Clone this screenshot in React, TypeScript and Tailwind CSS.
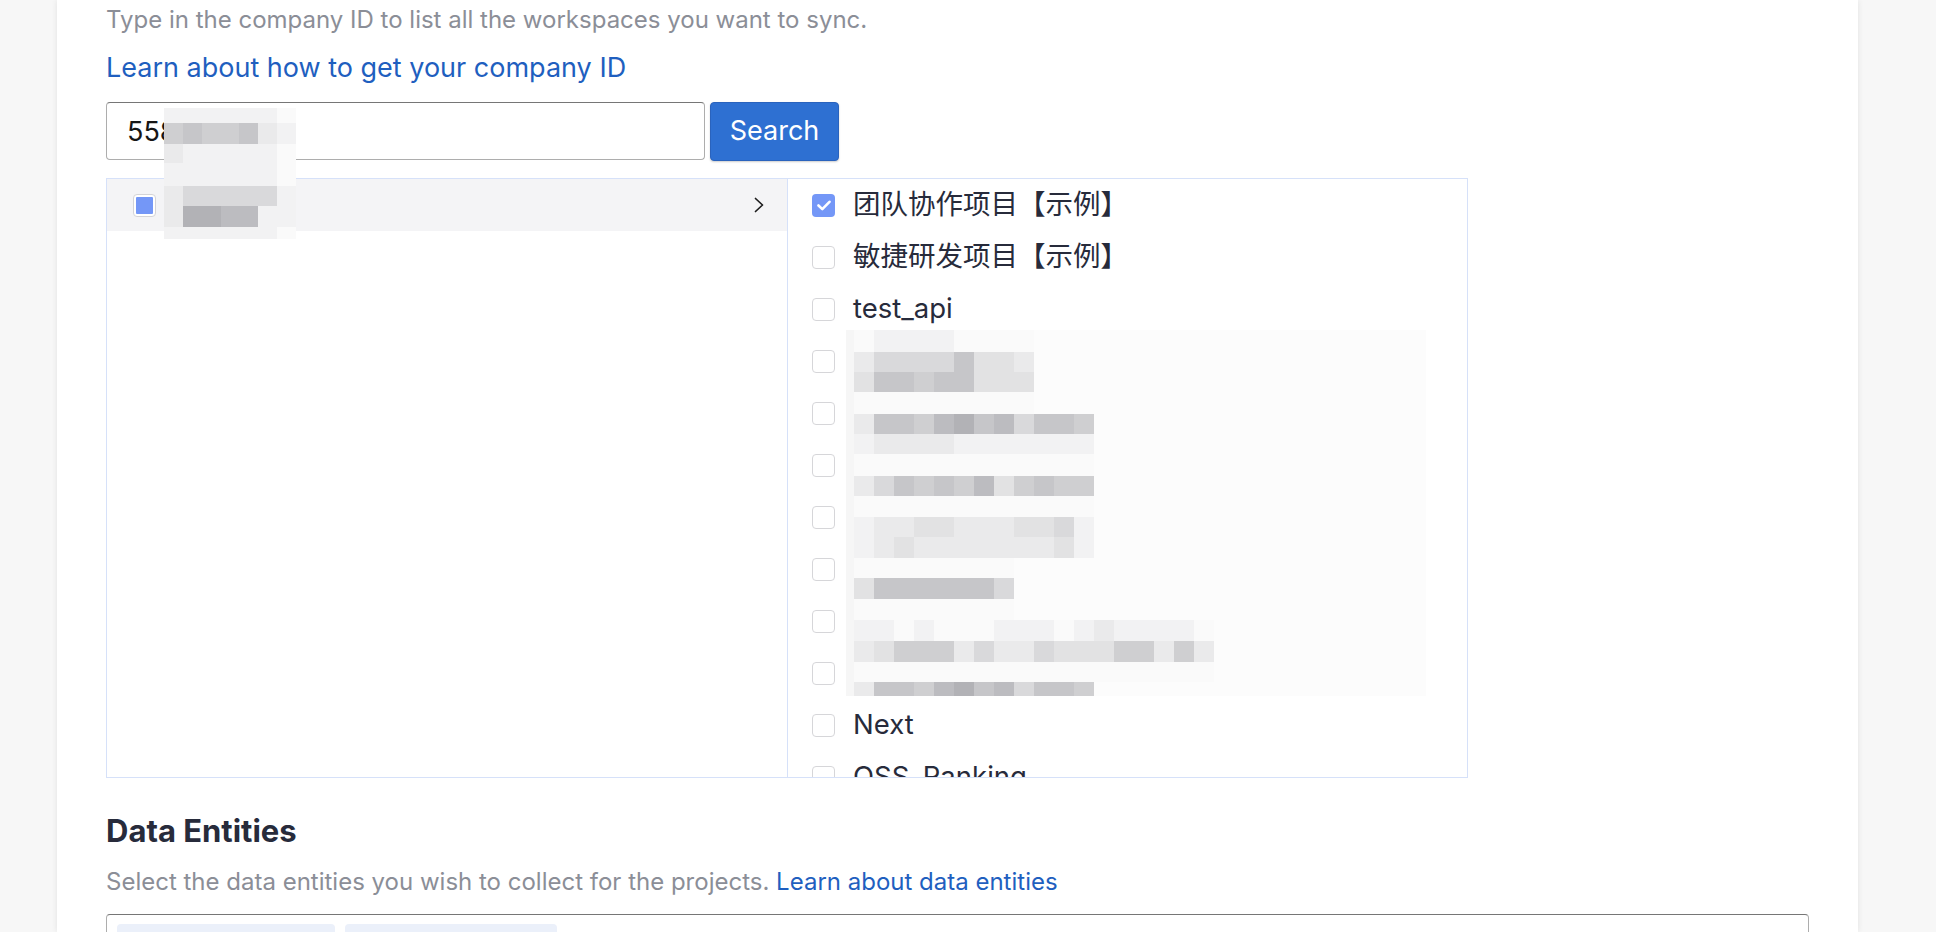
import React from "react";

// mosaic tones, light to dark
const tone: Record<string, string> = {
  a: "bg-[#fafafa]",
  b: "bg-[#f2f2f3]",
  c: "bg-[#eaeaeb]",
  d: "bg-[#e2e2e3]",
  e: "bg-[#d9d9db]",
  f: "bg-[#cfcfd1]",
  g: "bg-[#c6c6c9]",
  h: "bg-[#bcbcc0]",
  i: "bg-[#b2b2b6]",
};

type Band = { h: string; cells: string };

const idBands: Band[] = [
  { h: "h-[15px]", cells: "bbbbbba" },
  { h: "h-[21px]", cells: "fgffgcb" },
  { h: "h-[19px]", cells: "cbbbbba" },
  { h: "h-[23px]", cells: "bbbbbba" },
  { h: "h-[20px]", cells: "ceeeeeb" },
  { h: "h-[21px]", cells: "ciihhbb" },
  { h: "h-[12px]", cells: "bbbbbba" },
];

const listBands: Band[] = [
  { h: "h-[22px]", cells: "abbbbaaaa" },
  { h: "h-[20px]", cells: "ceeeegddc" },
  { h: "h-[20px]", cells: "dggfggddd" },
  { h: "h-[22px]", cells: "aaaaaaaaa" },
  { h: "h-[20px]", cells: "cggfhigheggf" },
  { h: "h-[20px]", cells: "bccccbbbbbbb" },
  { h: "h-[22px]", cells: "aaaaaaaaaaaa" },
  { h: "h-[20px]", cells: "cegfgfhdfgff" },
  { h: "h-[21px]", cells: "aaaaaaaaaaaa" },
  { h: "h-[20px]", cells: "bccddcccddeb" },
  { h: "h-[21px]", cells: "bcdcccccccdb" },
  { h: "h-[20px]", cells: "aaaaaaaa" },
  { h: "h-[21px]", cells: "dgggggge" },
  { h: "h-[21px]", cells: "aaaaaaaa" },
  { h: "h-[21px]", cells: "bbabaaabbbabcbbbba" },
  { h: "h-[21px]", cells: "cdfffceccedddffcfc" },
  { h: "h-[20px]", cells: "aaaaaaaaaaaaaaaaaa" },
  { h: "h-[14px]", cells: "cggfhigheggf" },
];

function Mosaic({ bands, lead }: { bands: Band[]; lead?: boolean }) {
  return (
    <div className="flex flex-col">
      {bands.map((b, i) => (
        <div key={i} className={`flex ${b.h}`}>
          {lead && <div className="w-[8px] bg-[#f6f6f6]" />}
          {b.cells.split("").map((c, j) => (
            <div key={j} className={`w-[20px] ${tone[c]}`} />
          ))}
        </div>
      ))}
    </div>
  );
}

function Checkbox({ checked }: { checked?: boolean }) {
  if (checked) {
    return (
      <span className="flex h-[23px] w-[23px] shrink-0 items-center justify-center rounded-[4px] bg-[#7497f7]">
        <svg width="14" height="11" viewBox="0 0 14 11" fill="none">
          <path d="M1.5 5.5l3.8 3.6L12.5 1.8" stroke="white" strokeWidth="2.6" strokeLinecap="round" strokeLinejoin="round" />
        </svg>
      </span>
    );
  }
  return <span className="h-[23px] w-[23px] shrink-0 rounded-[4px] border-[1.5px] border-[#d6d6d9] bg-white" />;
}

const projects = [
  { name: "团队协作项目【示例】", checked: true },
  { name: "敏捷研发项目【示例】" },
  { name: "test_api" },
  { name: "" },
  { name: "" },
  { name: "" },
  { name: "" },
  { name: "" },
  { name: "" },
  { name: "" },
  { name: "Next" },
  { name: "OSS_Ranking" },
  { name: "" },
];

export default function App() {
  return (
    <div className="h-[932px] overflow-hidden bg-[#f7f7f7] font-['Inter','Noto_Sans_CJK_SC',sans-serif]">
      <div className="ml-[57px] h-full w-[1801px] bg-white px-[49px] shadow-[0_0_6px_rgba(0,0,0,0.09)]">
        <p className="pt-[4px] text-[24px] leading-[32px] text-[#8b8e97]">
          Type in the company ID to list all the workspaces you want to sync.
        </p>
        <a href="#" className="mt-[14px] block text-[27px] leading-[36px] text-[#1f5fbf]">
          Learn about how to get your company ID
        </a>

        <div className="relative mt-[16px]">
          <div className="flex items-start gap-[5px]">
            <input
              readOnly
              value="558"
              className="h-[58px] w-[599px] rounded-[4px] border border-[#adadad] border-t-[#767676] px-[20px] text-[27px] text-[#161616] outline-none"
            />
            <button className="h-[59px] w-[129px] rounded-[4px] border border-[#2a63bd] bg-[#2e70d2] text-[27px] text-white shadow-[0_1px_2px_rgba(0,0,0,0.2)]">
              Search
            </button>
          </div>

          <div className="relative mt-[17px] flex h-[600px] w-[1362px] border border-[#d6e1f9]">
            <div className="w-[680px]">
              <div className="flex h-[52px] items-center bg-[#f4f4f6] pl-[26px] pr-[23px]">
                <span className="h-[23px] w-[23px] shrink-0 rounded-[4px] border-[1.5px] border-[#d4d4d7] bg-white p-[2px]">
                  <span className="block h-full w-full rounded-[1px] bg-[#7497f7]" />
                </span>
                <span className="flex-1" />
                <svg width="10" height="16" viewBox="0 0 10 16" fill="none">
                  <path d="M1.5 1.5L8.5 8L1.5 14.5" stroke="#1e1e1e" strokeWidth="1.7" strokeLinecap="round" strokeLinejoin="round" />
                </svg>
              </div>
            </div>

            <div className="flex-1 overflow-hidden border-l border-[#d6e1f9]">
              {projects.map((p, i) => (
                <div key={i} className="flex h-[52px] items-center gap-[18px] pl-[24px]">
                  <Checkbox checked={p.checked} />
                  <span className="text-[27.5px] leading-none text-[#272b3b]">{p.name}</span>
                </div>
              ))}
            </div>

            {/* pixelated project names */}
            <div className="absolute left-[739px] top-[151px] h-[366px] w-[580px] bg-[#fcfcfc]">
              <Mosaic bands={listBands} lead />
            </div>
          </div>

          {/* pixelated company id / name */}
          <div className="absolute left-[58px] top-[6px] h-[131px] w-[132px] overflow-hidden bg-[#f7f7f7]">
            <Mosaic bands={idBands} />
          </div>
        </div>

        <h2 className="mt-[33px] text-[31px] font-bold leading-[40px] text-[#272b3b]">Data Entities</h2>
        <p className="mt-[15px] text-[24px] leading-[32px] text-[#8b8e97]">
          Select the data entities you wish to collect for the projects.{" "}
          <a href="#" className="text-[#1f5fbf]">
            Learn about data entities
          </a>
        </p>
        <div className="mt-[16px] flex h-[80px] w-[1703px] gap-[10px] rounded-[4px] border border-[#adadad] border-t-[#767676] pl-[10px] pt-[9px]">
          <div className="h-[44px] w-[218px] rounded-[4px] bg-[#ebf0fa]" />
          <div className="h-[44px] w-[212px] rounded-[4px] bg-[#ebf0fa]" />
        </div>
      </div>
    </div>
  );
}
